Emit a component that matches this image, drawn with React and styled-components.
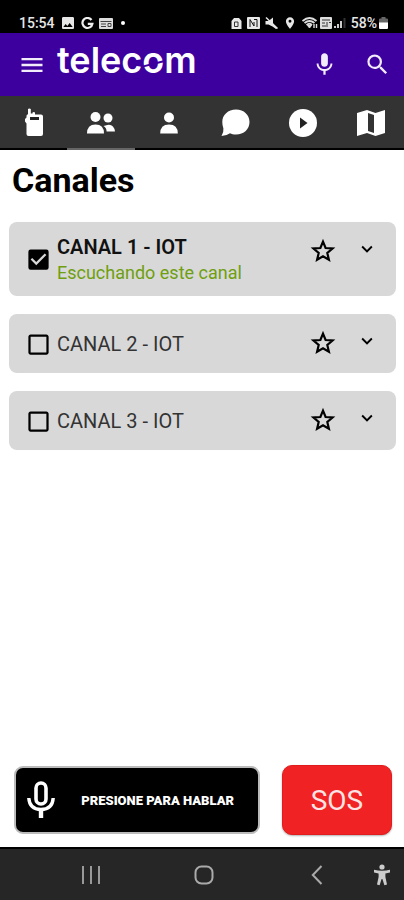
import React, { useState } from "react";
import styled, { createGlobalStyle } from "styled-components";
import {
  MdMenu,
  MdMic,
  MdSearch,
  MdImage,
  MdLocationOn,
  MdCheckBox,
  MdCheckBoxOutlineBlank,
  MdExpandMore,
} from "react-icons/md";

const channelList = [
  { id: 1, name: "CANAL 1 - IOT" },
  { id: 2, name: "CANAL 2 - IOT" },
  { id: 3, name: "CANAL 3 - IOT" },
];

const RadioIcon = () => (
  <svg width='20' height='30' viewBox='0 0 20 30' fill='#fff'>
    <path d='M4 1 Q5.3 -0.2 6.8 1 V5.5 H8.5 V4.5 Q9.7 3.3 11 4.5 V6.5 H17 Q19 6.5 19 8.5 V26 Q19 28 17 28 H4.5 Q2.5 28 2.5 26 V15.5 L1 13.5 V11 L2.5 9.5 V7.5 L4 6 Z' />
    <path d='M6 9 H15 V12 H6 Z' fill='#222' />
  </svg>
);

const PeopleIcon = () => (
  <svg width='28' height='22' viewBox='0 0 28 22' fill='#fff'>
    <circle cx='21' cy='6' r='4.5' />
    <path d='M18.5 13.4 Q26.5 10.6 28 19.4 H19.6 Q19.6 16 16.5 14 Z' />
    <circle cx='8.5' cy='5' r='5' />
    <path d='M0 21.5 Q0 12.5 8.5 12.5 Q17 12.5 17 21.5 Z' />
  </svg>
);

const PersonIcon = () => (
  <svg width='18' height='22' viewBox='0 0 18 22' fill='#fff'>
    <circle cx='9' cy='5.5' r='5' />
    <path d='M0.2 21.5 Q0.2 12.5 9 12.5 Q17.8 12.5 17.8 21.5 Z' />
  </svg>
);

const ChatIcon = () => (
  <svg width='30' height='28' viewBox='0 0 30 28' fill='#fff'>
    <path d='M15 0.5 C23 0.5 28.5 6 28.5 13 C28.5 20 23 25.5 15 25.5 C12.5 25.5 10.5 25 9 24.2 Q5 27 0.5 27 Q2.9 23 2.4 19.5 Q1.3 16.5 1.3 13 C1.3 6 7 0.5 15 0.5 Z' />
  </svg>
);

const PlayIcon = () => (
  <svg width='28' height='28' viewBox='0 0 28 28'>
    <circle cx='14' cy='14' r='14' fill='#fff' />
    <path d='M11 8.5 L18.5 14 L11 19.5 Z' fill='#222' />
  </svg>
);

const MapIcon = () => (
  <svg width='30' height='28' viewBox='0 0 30 28'>
    <path
      d='M1 4 L11 1 L19.5 4 L29 1 V24 L19.5 27 L11 24 L1 27 Z'
      fill='#fff'
    />
    <path d='M12 4 L18 6 V24 L12 22 Z' fill='#333' />
  </svg>
);

const StarIcon = () => (
  <svg width='26' height='26' viewBox='0 0 26 26' fill='none'>
    <path
      d='M13 3.6 L15.6 10 L22.6 10.5 L17.3 15 L18.9 21.8 L13 18.2 L7.1 21.8 L8.7 15 L3.4 10.5 L10.4 10 Z'
      stroke='#000'
      strokeWidth='2.2'
    />
  </svg>
);

const TalkIcon = () => (
  <svg width='28' height='38' viewBox='0 0 28 38' fill='none' stroke='#fff'>
    <rect x='9' y='2' width='10' height='21' rx='5' strokeWidth='3.6' />
    <path d='M1.8 17 Q2.5 28.5 14 28.5 Q25.5 28.5 26.2 17' strokeWidth='3.4' />
    <path d='M14 28 V37' strokeWidth='4.4' />
  </svg>
);

const HomeIcon = () => (
  <svg width='11' height='13' viewBox='0 0 11 13' fill='#e8e8e8'>
    <path d='M3 1 H8 L10.5 4 V12 H0.5 V4 Z' />
    <path d='M3.5 5 H7 V9.5 H3.5 Z' stroke='#333' fill='none' />
  </svg>
);

const NfcIcon = () => (
  <svg width='13' height='12' viewBox='0 0 13 12'>
    <rect width='13' height='12' rx='1' fill='#e8e8e8' />
    <path d='M3 10 V2.5 L7 9 V5 M7 2.5 H10 V10' stroke='#111' fill='none' />
  </svg>
);

const MuteIcon = () => (
  <svg width='13' height='12' viewBox='0 0 13 12' fill='#e8e8e8'>
    <path d='M0.5 4 H3.5 L8 0.5 V6.5 L12.5 11 L11 12 L7.5 9.5 L3.5 7.5 H0.5 Z' />
    <path d='M1 0.5 L12.5 11.5' stroke='#e8e8e8' strokeWidth='1.4' />
  </svg>
);

const WifiIcon = () => (
  <svg width='16' height='12' viewBox='0 0 16 12' fill='none' stroke='#ddd'>
    <path
      d='M0.5 4 Q7.5 -2 14.5 4 M2.5 6 Q7.5 2 12.5 6 M4.5 8 Q7.5 5.5 10 8'
      strokeWidth='1.8'
    />
    <path d='M5.5 8.5 H9.5 L7.5 11 Z' fill='#ddd' />
    <path d='M12 7 V11 M14.5 7 V11' strokeWidth='1.4' />
  </svg>
);

const CardIcon = () => (
  <svg width='14' height='11' viewBox='0 0 14 11' fill='#ddd'>
    <rect width='14' height='11' rx='1' />
    <path
      d='M1.5 3.5 H12.5 M2 6 H7 M2 8.5 H7 M9 5.5 H12 V8.5 H9 Z'
      stroke='#444'
      fill='none'
    />
  </svg>
);

const GoogleIcon = () => (
  <svg width='13' height='13' viewBox='0 0 13 13' fill='none'>
    <path
      d='M10.5 3 A5 5 0 1 0 11.4 6.8 H6.8'
      stroke='#eee'
      strokeWidth='2.2'
    />
  </svg>
);

const SimIcon = () => (
  <svg width='12' height='12' viewBox='0 0 12 12' fill='none'>
    <rect width='12' height='12' rx='1' fill='#ddd' />
    <path d='M2 3 H10 M2 6 H5 M7 5 V10 M9 5.5 H11 M2 9 H6' stroke='#333' />
  </svg>
);

const SignalIcon = () => (
  <svg width='12' height='12' viewBox='0 0 12 12' fill='#ccc'>
    <path d='M0 9 H2 V11 H0 Z M3 7 H5 V11 H3 Z M6 4 H8 V11 H6 Z' />
    <path d='M9.5 1 H11.5 V11 H9.5 Z' fill='#333' />
  </svg>
);

const BatteryIcon = () => (
  <svg width='9' height='12' viewBox='0 0 9 12'>
    <path
      d='M2.5 0 H6.5 V1.5 H8 Q9 1.5 9 2.5 V6 H0 V2.5 Q0 1.5 1 1.5 H2.5 Z'
      fill='#666'
    />
    <path d='M0 5.5 H9 V11 Q9 12 8 12 H1 Q0 12 0 11 Z' fill='#fff' />
  </svg>
);

const RecentsIcon = () => (
  <svg width='20' height='20' viewBox='0 0 20 20'>
    <path d='M2 1 V19 M10 1 V19 M18 1 V19' stroke='#999' strokeWidth='2' />
  </svg>
);

const CircleIcon = () => (
  <svg width='20' height='20' viewBox='0 0 20 20' fill='none'>
    <rect
      x='1.5'
      y='1.5'
      width='17'
      height='17'
      rx='6'
      stroke='#aaa'
      strokeWidth='2'
    />
  </svg>
);

const BackIcon = () => (
  <svg width='12' height='20' viewBox='0 0 12 20' fill='none'>
    <path d='M10.5 1 L1.8 10 L10.5 19' stroke='#aaa' strokeWidth='2' />
  </svg>
);

const AccessIcon = () => (
  <svg width='18' height='22' viewBox='0 0 18 22' fill='#ccc'>
    <circle cx='9' cy='3' r='2.6' />
    <path d='M1 5.8 Q9 7.6 17 5.8 V8.4 L12.4 9.4 V13 L14 20.6 L11.4 21.2 L9.4 15 H8.6 L6.6 21.2 L4 20.6 L5.6 13 V9.4 L1 8.4 Z' />
  </svg>
);

const tabs = [
  { label: "Radio", icon: <RadioIcon /> },
  { label: "Canales", icon: <PeopleIcon /> },
  { label: "Contactos", icon: <PersonIcon /> },
  { label: "Mensajes", icon: <ChatIcon /> },
  { label: "Grabaciones", icon: <PlayIcon /> },
  { label: "Mapa", icon: <MapIcon /> },
];

const App = () => {
  const [tab, setTab] = useState("Canales");
  const [listening, setListening] = useState([1]);

  const toggle = (id) =>
    setListening((ids) =>
      ids.includes(id) ? ids.filter((i) => i !== id) : [...ids, id]
    );

  return (
    <Screen>
      <GlobalStyle />
      <StatusBar>
        <StatusGroup>
          <span>15:54</span>
          <MdImage size={16} />
          <GoogleIcon />
          <CardIcon />
          <Dot />
        </StatusGroup>
        <StatusGroup>
          <HomeIcon />
          <NfcIcon />
          <MuteIcon />
          <MdLocationOn size={14} />
          <Network>
            <WifiIcon />
            <SimIcon />
            <SignalIcon />
          </Network>
          <Network>
            58%
            <BatteryIcon />
          </Network>
        </StatusGroup>
      </StatusBar>

      <AppBar>
        <IconButton aria-label='Menu'>
          <MdMenu size={28} />
        </IconButton>
        <Logo>
          telec<span>o</span>m
        </Logo>
        <IconButton aria-label='Microfono'>
          <MdMic size={27} />
        </IconButton>
        <IconButton aria-label='Buscar'>
          <MdSearch size={27} />
        </IconButton>
      </AppBar>

      <Tabs>
        {tabs.map(({ label, icon }) => (
          <Tab
            key={label}
            aria-label={label}
            $active={tab === label}
            onClick={() => setTab(label)}
          >
            {icon}
          </Tab>
        ))}
      </Tabs>

      <Content>
        <h1>Canales</h1>
        <List>
          {channelList.map(({ id, name }) => {
            const on = listening.includes(id);
            return (
              <Channel key={id}>
                <ChannelLabel>
                  <Check>
                    <input
                      type='checkbox'
                      checked={on}
                      onChange={() => toggle(id)}
                    />
                    {on ? (
                      <MdCheckBox size={27} />
                    ) : (
                      <MdCheckBoxOutlineBlank size={27} />
                    )}
                  </Check>
                  <ChannelText>
                    <Name $on={on}>{name}</Name>
                    {on && <Listening>Escuchando este canal</Listening>}
                  </ChannelText>
                </ChannelLabel>
                <Actions>
                  <IconButton aria-label={`Favorito ${name}`}>
                    <StarIcon />
                  </IconButton>
                  <IconButton aria-label={`Detalles ${name}`}>
                    <MdExpandMore size={22} />
                  </IconButton>
                </Actions>
              </Channel>
            );
          })}
        </List>
      </Content>

      <Footer>
        <TalkButton>
          <TalkIcon />
          <span>PRESIONE PARA HABLAR</span>
        </TalkButton>
        <SosButton>SOS</SosButton>
      </Footer>

      <NavBar>
        <IconButton aria-label='Recientes'>
          <RecentsIcon />
        </IconButton>
        <IconButton aria-label='Inicio'>
          <CircleIcon />
        </IconButton>
        <IconButton aria-label='Atras'>
          <BackIcon />
        </IconButton>
        <IconButton aria-label='Accesibilidad'>
          <AccessIcon />
        </IconButton>
      </NavBar>
    </Screen>
  );
};

const GlobalStyle = createGlobalStyle`
  * {
    box-sizing: border-box;
  }
  body {
    margin: 0;
    background: #fff;
    font-family: Roboto, "Liberation Sans", sans-serif;
  }
  button {
    font-family: inherit;
    cursor: pointer;
  }
  svg {
    display: block;
    flex-shrink: 0;
  }
`;

const Screen = styled.div`
  min-height: 100vh;
  display: flex;
  flex-direction: column;
  background: #fff;
`;

const StatusBar = styled.div`
  background: #000;
  color: #e6e6e6;
  height: 33px;
  padding: 13px 16px 0 19px;
  display: flex;
  justify-content: space-between;
  font-size: 14px;
  font-weight: 500;
  line-height: 20px;
`;

const StatusGroup = styled.div`
  display: flex;
  align-items: center;
  gap: 5px;
`;

const Dot = styled.i`
  width: 4px;
  height: 4px;
  margin-left: 3px;
  border-radius: 50%;
  background: #fff;
`;

const Network = styled.span`
  display: flex;
  align-items: center;
  gap: 2px;
`;

const IconButton = styled.button`
  display: grid;
  place-items: center;
  padding: 0;
  border: none;
  background: none;
  color: inherit;
`;

const AppBar = styled.header`
  background: #3d009e;
  color: #f1ebfa;
  height: 63px;
  padding: 0 13px 0 18px;
  display: flex;
  align-items: center;
  gap: 26px;
`;

const Logo = styled.div`
  flex: 1;
  margin-left: -15px;
  padding-bottom: 10px;
  font-family: Inter, sans-serif;
  font-size: 36px;
  font-weight: 600;
  line-height: 44px;
  color: #fff;
  span {
    position: relative;
  }
  /* slanted cut through the "o" */
  span::after {
    content: "";
    position: absolute;
    top: 58%;
    left: 0;
    width: 100%;
    height: 2px;
    background: #3d009e;
    transform: rotate(-14deg);
  }
`;

const Tabs = styled.nav`
  background: #333;
  height: 54px;
  display: grid;
  grid-template-columns: repeat(6, 1fr);
`;

const Tab = styled.button`
  display: grid;
  place-items: center;
  padding: 2px 0 0 1px;
  border: none;
  border-bottom: 2px solid ${({ $active }) => ($active ? "#666" : "#000")};
  background: none;
  color: #fff;
`;

const Content = styled.main`
  flex: 1;
  padding: 9px 8px 0 9px;
  h1 {
    margin: 0 0 20px 3px;
    font-size: 34px;
    font-weight: 700;
    line-height: 43px;
    color: #000;
  }
`;

const List = styled.ul`
  margin: 0;
  padding: 0;
  list-style: none;
  display: grid;
  gap: 18px;
`;

const Channel = styled.li`
  min-height: 59px;
  padding: 12px 18px 11px 16px;
  display: flex;
  justify-content: space-between;
  border-radius: 8px;
  background: #d8d8d8;
`;

const ChannelLabel = styled.label`
  display: flex;
  align-items: center;
  gap: 5px;
  cursor: pointer;
`;

const Check = styled.span`
  display: grid;
  color: #000;
  input,
  svg {
    grid-area: 1 / 1;
  }
  input {
    appearance: none;
    width: 27px;
    height: 27px;
    margin: 0;
  }
  svg {
    pointer-events: none;
  }
`;

const ChannelText = styled.span`
  display: grid;
`;

const Name = styled.span`
  font-size: 20px;
  line-height: 27px;
  font-weight: ${({ $on }) => ($on ? 600 : 400)};
  color: ${({ $on }) => ($on ? "#111" : "#333")};
`;

const Listening = styled.span`
  font-size: 18px;
  line-height: 24px;
  color: #6f9f0f;
`;

const Actions = styled.div`
  padding-top: 4px;
  display: flex;
  align-items: flex-start;
  gap: 20px;
`;

const Footer = styled.footer`
  padding: 0 12px 12px 14px;
  display: flex;
  align-items: center;
  gap: 22px;
`;

const TalkButton = styled.button`
  flex: 1;
  height: 68px;
  padding: 0 24px 0 11px;
  display: flex;
  align-items: center;
  justify-content: space-between;
  border: 2px solid #bbb;
  border-radius: 9px;
  background: #000;
  color: #fff;
  font-size: 13px;
  font-weight: 900;
`;

const SosButton = styled.button`
  width: 30%;
  max-width: 110px;
  height: 70px;
  padding: 0;
  border: 1px solid #e01c1c;
  border-radius: 10px;
  background: #f02224;
  color: #fde4e4;
  font-size: 28px;
  box-shadow: 0 1px 2px rgba(0, 0, 0, 0.3);
`;

const NavBar = styled.nav`
  height: 53px;
  padding: 0 13px 0 35px;
  display: grid;
  grid-template-columns: 1fr 1fr 1fr auto;
  align-items: center;
  border-top: 2px solid #000;
  background: #262626;
`;

export default App;
